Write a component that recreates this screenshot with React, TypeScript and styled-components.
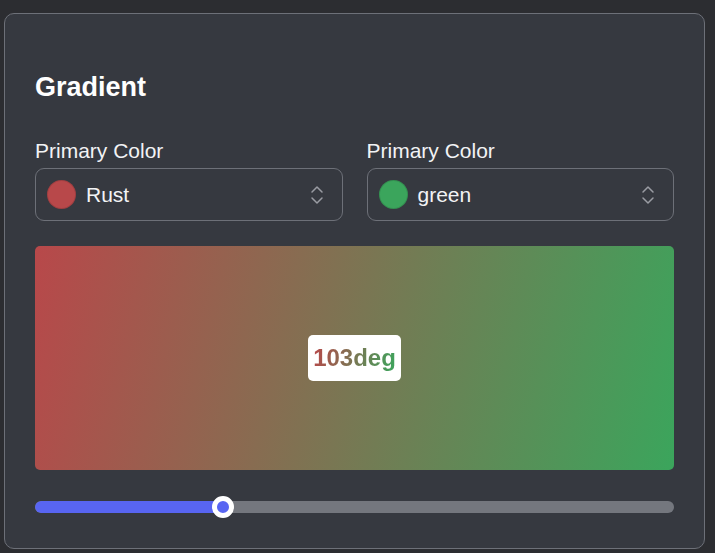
import React, { useState } from "react";
import styled, { createGlobalStyle } from "styled-components";
import { ChevronsUpDown } from "lucide-react";

const RUST = "#b8484a";
const GREEN = "#3ba55c";
const BLURPLE = "#5865f2";

const Global = createGlobalStyle`
  html, body { margin: 0; padding: 0; background: #2c2d31; }
  body { font-family: "Liberation Sans", Arial, sans-serif; color: #f2f3f5; }
  * { box-sizing: border-box; }
`;

const Page = styled.div`
  height: 553px;
  padding: 13px 10px 4px 4px;
`;

const Card = styled.section`
  height: 536px;
  background: #363940;
  border: 1px solid #6d7078;
  border-radius: 10px;
  padding: 58px 30px 30px;
  display: flex;
  flex-direction: column;
`;

const Title = styled.h2`
  margin: 0 0 36px;
  font-size: 27px;
  font-weight: 700;
  line-height: 31px;
  color: #ffffff;
`;

const Fields = styled.div`
  display: grid;
  grid-template-columns: 1fr 1fr;
  gap: 24px;
`;

const Field = styled.div`
  display: flex;
  flex-direction: column;
  gap: 5px;
`;

const Label = styled.label`
  font-size: 21px;
  line-height: 24px;
  color: #f2f3f5;
`;

const Select = styled.button`
  height: 53px;
  display: flex;
  align-items: center;
  gap: 10px;
  padding: 0 13px 0 11px;
  background: transparent;
  border: 1px solid #6d7078;
  border-radius: 9px;
  font: inherit;
  font-size: 21px;
  color: #f2f3f5;
  text-align: left;
  cursor: pointer;
`;

const Swatch = styled.span<{ $color: string }>`
  width: 29px;
  height: 29px;
  flex: none;
  border-radius: 50%;
  background: ${(p) => p.$color};
  box-shadow: inset 0 0 0 1px rgba(0, 0, 0, 0.12);
`;

const SelectText = styled.span`
  flex: 1;
`;

const Chevron = styled(ChevronsUpDown)`
  color: #9a9ca3;
  flex: none;
`;

const Preview = styled.div<{ $from: string; $to: string; $deg: number }>`
  margin-top: 25px;
  height: 224px;
  border-radius: 5px;
  background: linear-gradient(${(p) => p.$deg}deg, ${(p) => p.$from}, ${(p) => p.$to});
  display: flex;
  align-items: center;
  justify-content: center;
`;

const Badge = styled.div`
  background: #ffffff;
  border-radius: 5px;
  padding: 9px 5px;
`;

const BadgeText = styled.span<{ $from: string; $to: string; $deg: number }>`
  font-size: 24px;
  font-weight: 700;
  line-height: 28px;
  background: linear-gradient(${(p) => p.$deg}deg, ${(p) => p.$from}, ${(p) => p.$to});
  -webkit-background-clip: text;
  background-clip: text;
  color: transparent;
`;

const Slider = styled.div`
  margin-top: 26px;
  height: 22px;
  position: relative;
  display: flex;
  align-items: center;
`;

const Track = styled.div`
  flex: 1;
  height: 12px;
  border-radius: 6px;
  background: #74777e;
  overflow: hidden;
`;

const Fill = styled.div`
  height: 100%;
  background: ${BLURPLE};
  border-radius: 6px 0 0 6px;
`;

const Thumb = styled.div`
  position: absolute;
  top: 0;
  width: 22px;
  height: 22px;
  margin-left: -11px;
  border-radius: 50%;
  background: ${BLURPLE};
  border: 5px solid #ffffff;
`;

export default function App() {
  const [deg] = useState(103);
  const frac = deg / 360;
  const pos = `calc(11px + (100% - 22px) * ${frac})`;
  return (
    <Page>
      <Global />
      <Card>
        <Title>Gradient</Title>
        <Fields>
          <Field>
            <Label>Primary Color</Label>
            <Select>
              <Swatch $color={RUST} />
              <SelectText>Rust</SelectText>
              <Chevron size={24} strokeWidth={1.5} />
            </Select>
          </Field>
          <Field>
            <Label>Primary Color</Label>
            <Select>
              <Swatch $color={GREEN} />
              <SelectText>green</SelectText>
              <Chevron size={24} strokeWidth={1.5} />
            </Select>
          </Field>
        </Fields>
        <Preview $from={RUST} $to={GREEN} $deg={deg}>
          <Badge>
            <BadgeText $from={RUST} $to={GREEN} $deg={deg}>
              {deg}deg
            </BadgeText>
          </Badge>
        </Preview>
        <Slider>
          <Track>
            <Fill style={{ width: pos }} />
          </Track>
          <Thumb style={{ left: pos }} />
        </Slider>
      </Card>
    </Page>
  );
}
